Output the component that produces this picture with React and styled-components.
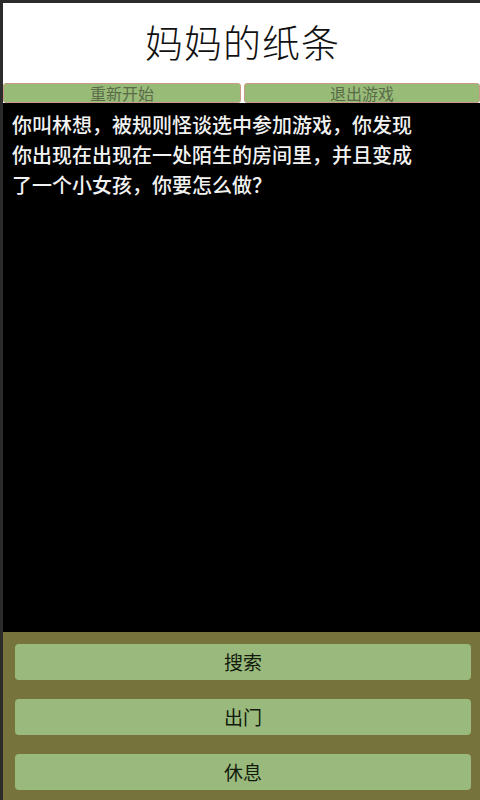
import React from "react";
import styled, { createGlobalStyle } from "styled-components";

const Global = createGlobalStyle`
  html, body { margin: 0; padding: 0; background: #2b2b2b; }
  body { font-family: "Noto Sans CJK SC", "Noto Sans", sans-serif; }
  * { box-sizing: border-box; }
`;

const Screen = styled.div`
  width: 480px;
  height: 800px;
  display: flex;
  flex-direction: column;
  border-top: 3px solid #2b2b2b;
  border-left: 3px solid #2b2b2b;
  background: #000;
  overflow: hidden;
`;

const Header = styled.header`
  height: 80px;
  background: #fff;
  display: flex;
  align-items: center;
  justify-content: center;
  padding: 0 0 6px 2px;
`;

const Title = styled.h1`
  margin: 0;
  font-size: 38px;
  font-weight: 300;
  color: #111;
  letter-spacing: 1px;
`;

const TopBar = styled.div`
  height: 20px;
  display: grid;
  grid-template-columns: 238px 1fr;
  gap: 3px;
  background: #fff;
`;

const TopButton = styled.button`
  margin: 0;
  padding: 1px 0 0 0;
  height: 20px;
  border: 1px solid #c99b86;
  border-radius: 3px;
  background: #98bb78;
  color: #5a6b48;
  font-family: "Noto Sans CJK SC", sans-serif;
  font-size: 16px;
  font-weight: 400;
  line-height: 17px;
  display: flex;
  align-items: center;
  justify-content: center;
`;

const Story = styled.main`
  flex: 1;
  background: #000;
  padding: 7px 0 0 9px;
`;

const StoryText = styled.p`
  margin: 0;
  max-width: 404px;
  color: #f2f2f2;
  font-size: 20px;
  font-weight: 500;
  line-height: 30px;
`;

const Actions = styled.div`
  height: 168px;
  background: #76733d;
  padding: 12px 9px 10px 12px;
  display: flex;
  flex-direction: column;
  gap: 19px;
`;

const ActionButton = styled.button`
  height: 36px;
  border: none;
  border-radius: 4px;
  background: #9aba7d;
  color: #121a0c;
  font-family: "Noto Sans CJK SC", sans-serif;
  font-size: 19px;
  font-weight: 400;
  display: flex;
  align-items: center;
  justify-content: center;
  padding: 0 0 2px 0;
`;

export default function App() {
  return (
    <>
      <Global />
      <Screen>
        <Header>
          <Title>妈妈的纸条</Title>
        </Header>
        <TopBar>
          <TopButton>重新开始</TopButton>
          <TopButton>退出游戏</TopButton>
        </TopBar>
        <Story>
          <StoryText>
            你叫林想，被规则怪谈选中参加游戏，你发现你出现在出现在一处陌生的房间里，并且变成了一个小女孩，你要怎么做？
          </StoryText>
        </Story>
        <Actions>
          <ActionButton>搜索</ActionButton>
          <ActionButton>出门</ActionButton>
          <ActionButton>休息</ActionButton>
        </Actions>
      </Screen>
    </>
  );
}
